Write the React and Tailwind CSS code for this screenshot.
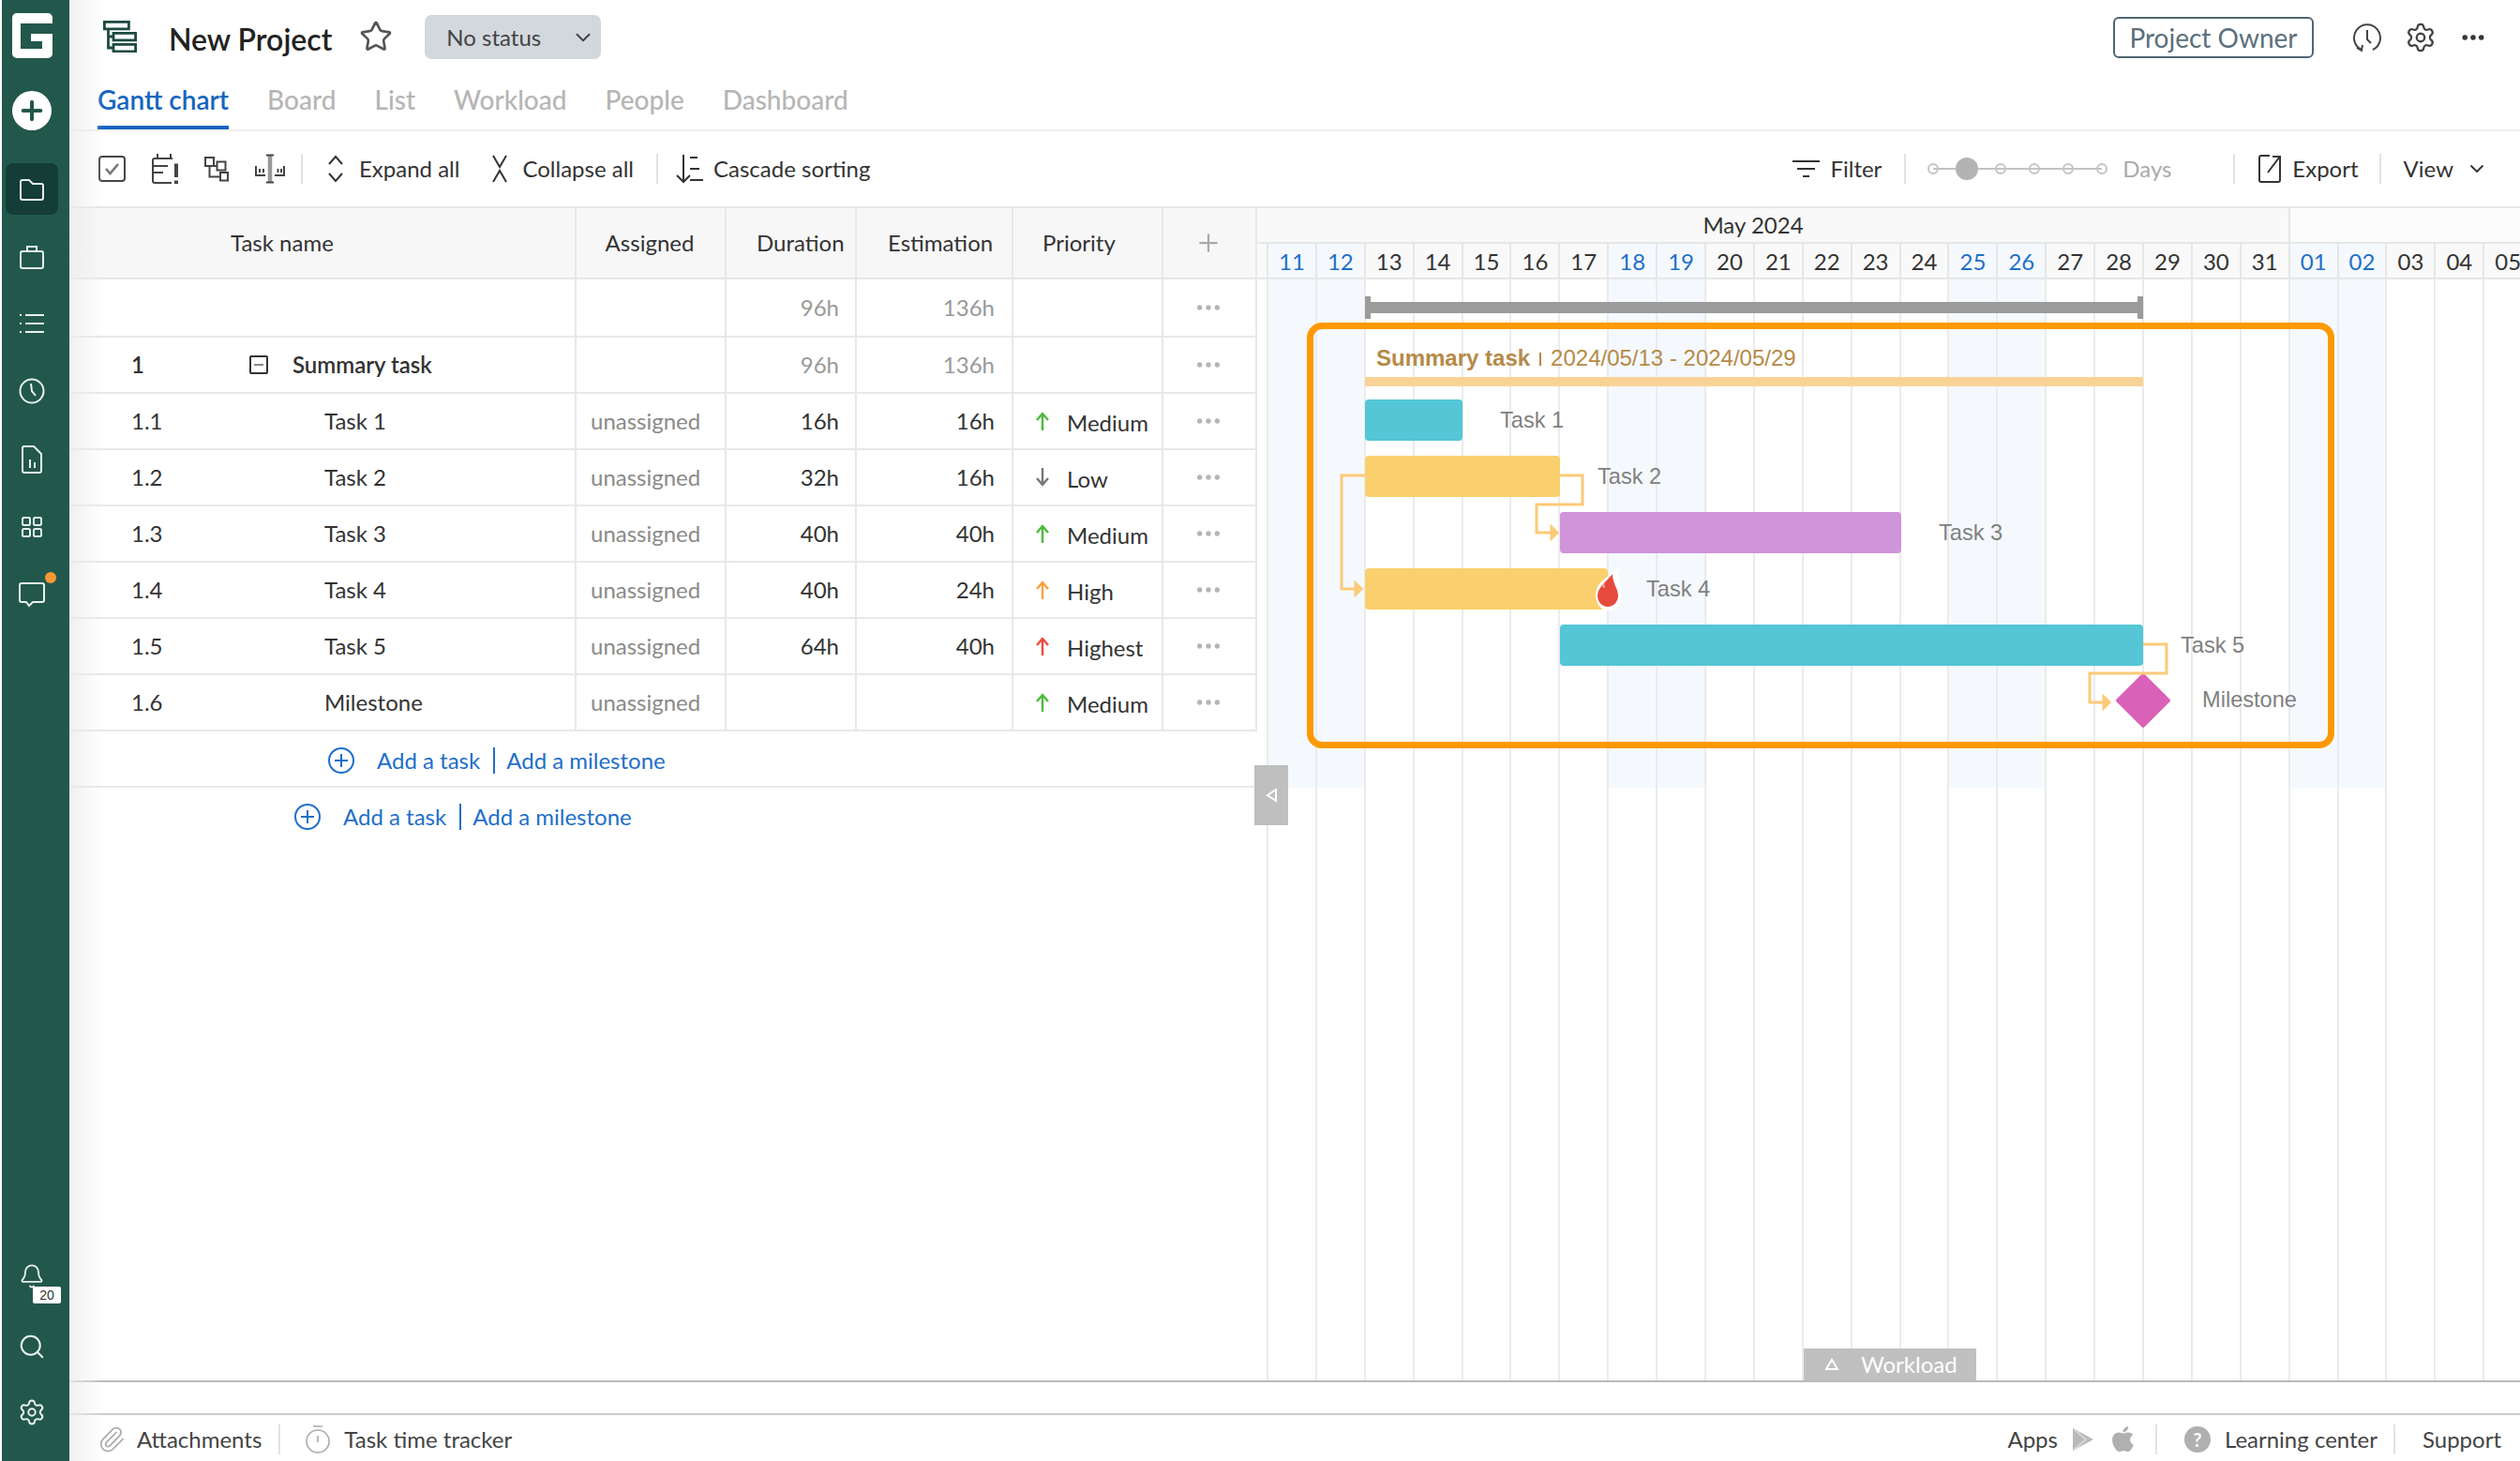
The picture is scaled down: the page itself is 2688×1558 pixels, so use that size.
import React from "react";
import { Star, ChevronDown, Settings, Bell, Search, Paperclip, Plus, Ellipsis } from "lucide-react";
import { FaApple } from "react-icons/fa";

const S = ({ w, h, vb, children, cls = "" , stroke = "currentColor", sw = 2}) => (
  <svg width={w} height={h} viewBox={vb || `0 0 ${w} ${h}`} fill="none" stroke={stroke} strokeWidth={sw} className={`shrink-0 ${cls}`}>{children}</svg>
);

function Logo() {
  return (
    <svg width="43" height="48" viewBox="0 0 43 48" className="shrink-0">
      <rect width="43" height="48" rx="5" fill="#fff" />
      <path d="M9 11H43V22H20V30H32V38H9Z" fill="#22584b" />
    </svg>
  );
}

const SideItem = ({ children, cls = "" }) => <div className={`flex justify-center items-center ${cls}`}>{children}</div>;

function Sidebar() {
  return (
    <div className="w-[72px] h-full bg-[#22584b] flex flex-col items-center text-[#e8f0ee] relative pr-[8px]">
      <div className="mt-[14px]"><Logo /></div>
      <div className="mt-[35px] w-[42px] h-[42px] rounded-full bg-white flex items-center justify-center text-[#22584b]"><Plus size={32} strokeWidth={3} /></div>
      <div className="mt-[35px] w-[56px] h-[55px] rounded-[8px] bg-[#133d36] flex items-center justify-center">
        <S w={28} h={26} vb="0 0 28 26"><path d="M2 5a2 2 0 0 1 2-2h7l4 4h9a2 2 0 0 1 2 2v13a2 2 0 0 1-2 2H4a2 2 0 0 1-2-2Z" /></S>
      </div>
      <SideItem cls="mt-[29px] h-[32px]">
        <S w={28} h={28} vb="0 0 28 28"><rect x="2" y="8" width="24" height="18" rx="2" /><path d="M9 8V3h10v5" /></S>
      </SideItem>
      <SideItem cls="mt-[39px] h-[32px]">
        <S w={28} h={22} vb="0 0 28 22"><path d="M7 2h20M7 11h20M7 20h20M1 2h2M1 11h2M1 20h2" /></S>
      </SideItem>
      <SideItem cls="mt-[40px] h-[32px]">
        <S w={28} h={30} vb="0 0 28 30"><circle cx="14" cy="15" r="12.5" /><path d="M13 7l1 8 4 5" /></S>
      </SideItem>
      <SideItem cls="mt-[41px] h-[32px]">
        <S w={24} h={30} vb="0 0 24 30"><path d="M2 3a2 2 0 0 1 2-2h10l8 8v18a2 2 0 0 1-2 2H4a2 2 0 0 1-2-2Z" /><path d="M10 15v9M15 18v6" /></S>
      </SideItem>
      <SideItem cls="mt-[40px] h-[32px]">
        <S w={22} h={22} vb="0 0 22 22"><rect x="1" y="1" width="8" height="8" rx="1.5" /><rect x="13" y="1" width="8" height="8" rx="1.5" /><rect x="1" y="13" width="8" height="8" rx="1.5" /><rect x="13" y="13" width="8" height="8" rx="1.5" /></S>
      </SideItem>
      <SideItem cls="mt-[40px] h-[32px]">
        <S w={28} h={28} vb="0 0 28 28"><path d="M3 2h22a2 2 0 0 1 2 2v16a2 2 0 0 1-2 2H15l-4 4-3-4H3a2 2 0 0 1-2-2V4a2 2 0 0 1 2-2Z" /></S>
      </SideItem>
      <div className="absolute left-[46px] top-[610px] w-[12px] h-[12px] rounded-full bg-[#f59a33]" />
      <div className="mt-auto relative h-[40px] w-full flex justify-center mb-[46px]">
        <Bell size={28} strokeWidth={1.6} className="mt-[13px]" />
        <div className="absolute left-[33px] top-[38px] w-[30px] h-[18px] rounded-[2px] bg-white text-[#333] text-[14px] leading-[18px] text-center [font-family:'Liberation_Sans',sans-serif]">20</div>
      </div>
      <div className="mb-[38px] h-[32px] flex items-center"><Search size={30} strokeWidth={1.6} /></div>
      <div className="mb-[36px] h-[32px] flex items-center"><Settings size={30} strokeWidth={1.6} /></div>
    </div>
  );
}

function TopBar() {
  const tabs = ["Board", "List", "Workload", "People", "Dashboard"];
  return (
    <div className="h-[140px] border-b-2 border-[#eeeeee] flex flex-col">
      <div className="h-[76px] flex items-start pl-[36px] pr-[33px]">
        <S w={36} h={34} vb="0 0 36 34" cls="mt-[22px] text-[#1d4b41]" sw={2.8}>
          <rect x="1.4" y="1.4" width="26" height="7.5" />
          <rect x="11" y="13.4" width="23.6" height="7.5" />
          <rect x="11" y="25.4" width="23.6" height="7.5" />
          <path d="M5.5 9v20H11M5.5 17H11" />
        </S>
        <div className="ml-[34px] mt-[20px] h-[44px] leading-[44px] text-[32px] font-semibold text-[#222]">New Project</div>
        <Star size={36} strokeWidth={1.8} className="ml-[29px] mt-[21px] text-[#555]" />
        <div className="ml-[34px] mt-[16px] w-[188px] h-[47px] rounded-[7px] bg-[#d3d8de] flex items-center pl-[23px] pr-[6px] text-[24px] text-[#444]">
          No status
          <ChevronDown size={26} strokeWidth={1.8} className="ml-auto" />
        </div>
        <div className="ml-auto mt-[18px] w-[214px] h-[44px] rounded-[6px] border-2 border-[#4f6672] flex items-center justify-center text-[28px] text-[#5b6f7c]">Project Owner</div>
        <S w={32} h={32} vb="0 0 32 32" cls="ml-[41px] mt-[24px] text-[#444]"><path d="M10 29a14 14 0 1 1 12 0" /><path d="M16 8v10l4 4M5 27l5 3 1-6" /></S>
        <Settings size={34} strokeWidth={1.6} className="ml-[24px] mt-[23px] text-[#444]" />
        <Ellipsis size={30} strokeWidth={2.4} className="ml-[24px] mr-[2px] mt-[25px] text-[#333]" />
      </div>
      <div className="flex-1 flex items-stretch pl-[30px] gap-[41px] text-[28px] leading-[50px] text-[#b5b5b5]">
        <div className="text-[#1565c0] font-semibold border-b-[4px] border-[#1565c0] -mb-[2px] h-[64px] -mt-[2px] pt-[7px]">Gantt chart</div>
        {tabs.map((t) => <div key={t} className="pt-[5px] font-medium">{t}</div>)}
      </div>
    </div>
  );
}

const Divider = ({ cls = "" }) => <div className={`w-[2px] h-[32px] bg-[#e2e2e2] shrink-0 ${cls}`} />;

const Dot = () => (
  <div className="flex items-center justify-center">
    <span className="w-[12px] h-[12px] rounded-full border-2 border-[#c4c4c4] bg-white" />
  </div>
);

function Toolbar() {
  return (
    <div className="h-[82px] border-b-2 border-[#e6e6e6] flex items-center pl-[31px] text-[24px] text-[#333]">
      <S w={29} h={28} vb="0 0 29 28" cls="text-[#444]">
        <rect x="1" y="1" width="27" height="26" rx="3" />
        <path d="M8 14l4.5 5L21 9" stroke="#777777" strokeWidth="2.6" />
      </S>
      <S w={28} h={32} vb="0 0 28 32" cls="ml-[28px] text-[#444]">
        <path d="M6 0v5M20 0v5M22 5H3a2 2 0 0 0-2 2v22a2 2 0 0 0 2 2h18" />
        <path d="M2 13H17M2 20H12" />
        <path d="M26 10.5V25M26 28.5V32" strokeWidth="4" />
      </S>
      <S w={26} h={27} vb="0 0 26 27" cls="ml-[28px] text-[#444]">
        <rect x="1" y="1" width="9" height="9" />
        <rect x="13.5" y="5.5" width="9" height="9" />
        <rect x="17" y="17" width="8" height="8.5" />
        <path d="M5.5 10V21.5H17M10 10H13.5" />
      </S>
      <S w={32} h={32} vb="0 0 32 32" cls="ml-[28px] text-[#444]">
        <path d="M16 1V31" stroke="#999999" strokeWidth="4.5" />
        <path d="M12 1.5h8M12 30.5h8" />
        <path d="M1 13V23H11M5 16v4M9 16v4M31 13V23H21M24.5 16v4M28 16v4" />
      </S>
      <Divider cls="ml-[17px]" />
      <S w={18} h={30} vb="0 0 18 30" cls="ml-[26px]"><path d="M2 10l7-8 7 8M2 20l7 8 7-8" /></S>
      <span className="ml-[16px]">Expand all</span>
      <S w={18} h={30} vb="0 0 18 30" cls="ml-[34px]"><path d="M2 1l7 12 7-12M2 29l7-12 7 12" /></S>
      <span className="ml-[15px]">Collapse all</span>
      <Divider cls="ml-[24px]" />
      <S w={32} h={32} vb="0 0 32 32" cls="ml-[18px]"><path d="M9 1v29M2 23l7 7 7-7M16 4h8M16 16h10M16 28h14" /></S>
      <span className="ml-[9px]">Cascade sorting</span>
      <div className="ml-auto flex items-center pr-[33px]">
        <S w={29} h={20} vb="0 0 29 20"><path d="M0 2h29M5 10h19M11 18h7" /></S>
        <span className="ml-[11px]">Filter</span>
        <Divider cls="ml-[24px]" />
        <div className="ml-[11px] w-[216px] relative h-[24px] grid grid-cols-6">
          <div className="absolute left-[18px] right-[18px] top-[11px] h-[2px] bg-[#c4c4c4]" />
          <div className="relative contents">
            <Dot />
            <div className="flex items-center justify-center"><span className="relative w-[24px] h-[24px] rounded-full bg-[#b3b3b3]" /></div>
            <Dot />
            <Dot />
            <Dot />
            <Dot />
          </div>
        </div>
        <span className="ml-[4px] w-[118px] text-[#aaaaaa]">Days</span>
        <Divider />
        <S w={24} h={30} vb="0 0 24 30" cls="ml-[25px]"><path d="M12 1H3a2 2 0 0 0-2 2v24a2 2 0 0 0 2 2h18a2 2 0 0 0 2-2V10M10 19L22 3M15 2h8v8" /></S>
        <span className="ml-[12px]">Export</span>
        <Divider cls="ml-[22px]" />
        <span className="ml-[24px]">View</span>
        <ChevronDown size={24} strokeWidth={1.8} className="ml-[13px] mr-[1px]" />
      </div>
    </div>
  );
}

const Arrow = ({ color, down }) => (
  <svg width="14" height="20" viewBox="0 0 14 20" fill="none" stroke={color} strokeWidth="2.4" className={`shrink-0 ${down ? "rotate-180" : ""}`}>
    <path d="M7 20V2M1 9l6-7 6 7" />
  </svg>
);

const cellBase = "border-r-2 border-[#e8e8e8] flex items-center";
function Row({ num, name, bold, dur, est, prio, muted, h = "h-[60px]" }) {
  const c = muted ? "text-[#999999]" : "text-[#333]";
  return (
    <div className={`flex ${h} border-b-2 border-[#e8e8e8] text-[24px] text-[#333]`}>
      <div className={`${cellBase} w-[541px] relative`}>
        {num && <span className={`absolute left-[66px] ${bold ? "font-semibold" : ""}`}>{num}</span>}
        {bold && (
          <span className="absolute left-[192px] w-[20px] h-[20px] border-2 border-[#333] rounded-[2px] flex items-center justify-center"><span className="w-[10px] h-[2px] bg-[#888]" /></span>
        )}
        {name && <span className={`absolute ${bold ? "left-[238px] font-semibold" : "left-[272px]"}`}>{name}</span>}
      </div>
      <div className={`${cellBase} w-[160px] pl-[15px] text-[#8a8a8a]`}>{num && num !== "1" ? "unassigned" : ""}</div>
      <div className={`${cellBase} w-[139px] justify-end pr-[17px] ${c}`}>{dur}</div>
      <div className={`${cellBase} w-[167px] justify-end pr-[18px] ${c}`}>{est}</div>
      <div className={`${cellBase} w-[160px] pl-[24px]`}>
        {prio && <><Arrow color={prio.color} down={prio.down} /><span className="ml-[19px] pt-[4px]">{prio.label}</span></>}
      </div>
      <div className="w-[100px] border-r-2 border-[#e8e8e8] flex items-center justify-center pr-[2px] text-[#b5b5b5]"><Ellipsis size={32} strokeWidth={2} /></div>
    </div>
  );
}

const AddRow = ({ pad, border }) => (
  <div className={`h-[60px] flex items-center text-[24px] text-[#1e6fc8] ${border ? "border-b-2 border-[#e8e8e8] pt-[4px]" : "pt-[2px]"} ${pad}`}>
    <S w={28} h={28} vb="0 0 28 28" cls="text-[#1e6fc8]"><circle cx="14" cy="14" r="13" /><path d="M14 7v14M7 14h14" /></S>
    <span className="ml-[24px]">Add a task</span>
    <span className="ml-[14px] w-[2px] h-[28px] bg-[#1e6fc8]" />
    <span className="ml-[12px]">Add a milestone</span>
  </div>
);

function Table() {
  const green = "#4cba3c";
  const Med = { color: green, label: "Medium" };
  return (
    <div className="w-[1267px] shrink-0 flex flex-col h-full">
      <div className="flex h-[76px] border-b-2 border-[#e6e6e6] bg-[#f7f7f7] text-[24px] text-[#333]">
        <div className={`${cellBase} w-[541px] pl-[172px]`}>Task name</div>
        <div className={`${cellBase} w-[160px] justify-center pr-[2px]`}>Assigned</div>
        <div className={`${cellBase} w-[139px] pl-[32px]`}>Duration</div>
        <div className={`${cellBase} w-[167px] pl-[33px]`}>Estimation</div>
        <div className={`${cellBase} w-[160px] pl-[31px]`}>Priority</div>
        <div className="w-[100px] border-r-2 border-[#e8e8e8] flex items-center justify-center pr-[2px] text-[#aaaaaa]"><Plus size={30} strokeWidth={1.8} /></div>
      </div>
      <Row h="h-[62px]" dur="96h" est="136h" muted />
      <Row num="1" name="Summary task" bold dur="96h" est="136h" muted />
      <Row num="1.1" name="Task 1" dur="16h" est="16h" prio={Med} />
      <Row num="1.2" name="Task 2" dur="32h" est="16h" prio={{ color: "#777777", label: "Low", down: true }} />
      <Row num="1.3" name="Task 3" dur="40h" est="40h" prio={Med} />
      <Row num="1.4" name="Task 4" dur="40h" est="24h" prio={{ color: "#f9a03c", label: "High" }} />
      <Row num="1.5" name="Task 5" dur="64h" est="40h" prio={{ color: "#f0483e", label: "Highest" }} />
      <Row num="1.6" name="Milestone" prio={Med} />
      <AddRow pad="pl-[276px]" border />
      <AddRow pad="pl-[240px]" />
    </div>
  );
}

const days = ["11","12","13","14","15","16","17","18","19","20","21","22","23","24","25","26","27","28","29","30","31","01","02","03","04","05"];
const wk = new Set(["11","12","18","19","25","26","01","02"]);

function Gantt() {
  return (
    <div className="flex-1 min-w-0 h-full flex flex-col relative">
      <div className="h-[38px] flex border-b-2 border-[#e6e6e6]">
        <div className="w-[1102px] shrink-0 bg-[#f9f9f9] border-r-2 border-[#e6e6e6] flex items-center justify-center text-[24px] leading-none text-[#333] pr-[42px]">May 2024</div>
        <div className="flex-1 bg-[#fcfcfc]" />
      </div>
      <div className="h-[38px] flex border-b-2 border-[#e6e6e6] bg-[#f9f9f9] text-[24px]">
        <div className="w-[10px] shrink-0" />
        {days.map((d) => (
          <div key={d} className={`w-[51.9px] shrink-0 border-l-2 border-[#e6e6e6] flex items-center justify-center pt-[1px] ${wk.has(d) ? "bg-[#f5f9fe] text-[#1e6fc8]" : "text-[#333]"}`}>{d}</div>
        ))}
      </div>
      <div className="flex-1 relative flex">
        <div className="w-[10px] shrink-0" />
        {days.map((d) => (
          <div key={d} className="w-[51.9px] shrink-0 border-l-2 border-[#ebebeb]">
            {wk.has(d) && <div className="h-[542px] bg-[#f5f9fe]" />}
          </div>
        ))}

        <div className="absolute left-[115px] top-[24px] w-[830px] h-[12px] bg-[#9b9b9b]" />
        <div className="absolute left-[115px] top-[18px] w-[6px] h-[24px] bg-[#9b9b9b]" />
        <div className="absolute left-[939px] top-[18px] w-[6px] h-[24px] bg-[#9b9b9b]" />

        <div className="absolute left-[53px] top-[46px] w-[1096px] h-[454px] border-[7px] border-[#ff9900] rounded-[16px]" />

        <div className="absolute left-[127px] top-[69px] h-[30px] leading-[30px] whitespace-nowrap text-[24px] text-[#b58a47] [font-family:'Liberation_Sans',sans-serif]">
          <span className="font-bold">Summary task</span>
          <span className="inline-block w-[2px] h-[14px] bg-[#b58a47] mx-[10px]" />
          <span>2024/05/13 - 2024/05/29</span>
        </div>
        <div className="absolute left-[115px] top-[104px] w-[830px] h-[10px] bg-[#f9d396]" />

        <div className="absolute left-[115px] top-[128px] w-[104px] h-[44px] rounded-[4px] bg-[#54c6d6]" />
        <div className="absolute left-[115px] top-[188px] w-[208px] h-[44px] rounded-[4px] bg-[#fad06e]" />
        <div className="absolute left-[323px] top-[248px] w-[364px] h-[44px] rounded-[4px] bg-[#cf94d9]" />
        <div className="absolute left-[115px] top-[308px] w-[259px] h-[44px] rounded-[4px] bg-[#fad06e]" />
        <div className="absolute left-[323px] top-[368px] w-[622px] h-[44px] rounded-[4px] bg-[#54c6d6]" />
        <div className="absolute left-[924px] top-[428px] w-[42px] h-[42px] rotate-45 rounded-[2px] bg-[#d962b8]" />

        <svg width="1100" height="520" className="absolute left-0 top-0" fill="none" stroke="#fcca78" strokeWidth="3">
          <path d="M115 209H90V330H106" />
          <path d="M323 209H347V240H298V270H315" />
          <path d="M945 389H970V420H888V451H904" />
          <path d="M105 324L111 330L105 336Z" fill="#fcca78" />
          <path d="M314 264L320 270L314 276Z" fill="#fcca78" />
          <path d="M903 445L909 451L903 457Z" fill="#fcca78" />
        </svg>

        <svg width="30" height="48" viewBox="0 0 30 48" className="absolute left-[359px] top-[306px]">
          <path d="M28 1C20 8 2 16 2 30C2 40 8 47 15 47C24 47 30 40 30 29C30 22 24 14 28 1Z" fill="#fff" />
          <path d="M20 8C16 14 4 22 4 31C4 38 9 43 15 43C21 43 26 38 26 31C26 24 20 18 20 8Z" fill="#e64a3d" />
          <path d="M9 22l2-4 1 5z" fill="#f5b5a8" />
        </svg>

        {[
          ["left-[259px] top-[135px]", "Task 1"],
          ["left-[363px] top-[195px]", "Task 2"],
          ["left-[727px] top-[255px]", "Task 3"],
          ["left-[415px] top-[315px]", "Task 4"],
          ["left-[985px] top-[375px]", "Task 5"],
          ["left-[1008px] top-[433px]", "Milestone"],
        ].map(([p, t]) => (
          <div key={t} className={`absolute ${p} h-[30px] leading-[30px] whitespace-nowrap text-[23.6px] text-[#808080] [font-family:'Liberation_Sans',sans-serif]`}>{t}</div>
        ))}

        <div className="absolute left-[-3px] top-[518px] w-[36px] h-[64px] bg-[#bfbfbf] flex items-center justify-center">
          <svg width="14" height="16" viewBox="0 0 14 16" fill="none" stroke="#fff" strokeWidth="2"><path d="M12 2L3 8l9 6Z" /></svg>
        </div>
        <div className="absolute left-[583px] bottom-0 w-[184px] h-[34px] bg-[#bdbdbd]/95 flex items-center text-white text-[24px] pl-[22px]">
          <svg width="16" height="14" viewBox="0 0 16 14" fill="none" stroke="#fff" strokeWidth="2"><path d="M8 2L2 12h12Z" /></svg>
          <span className="ml-[23px]">Workload</span>
        </div>
      </div>
    </div>
  );
}

function Footer() {
  return (
    <div className="h-[51px] border-t-2 border-[#cccccc] flex items-center text-[24px] text-[#444] pl-[30px] pr-[20px] pt-[2px]">
      <Paperclip size={30} strokeWidth={1.4} className="text-[#aaaaaa]" />
      <span className="ml-[12px]">Attachments</span>
      <Divider cls="ml-[18px]" />
      <S w={26} h={32} vb="0 0 26 32" cls="ml-[27px] text-[#aaaaaa]" sw={1.6}><circle cx="13" cy="18" r="12" /><path d="M8 2h10M13 12v7" /></S>
      <span className="ml-[15px]">Task time tracker</span>
      <div className="ml-auto flex items-center">
        <span>Apps</span>
        <svg width="24" height="26" viewBox="0 0 24 26" className="ml-[15px]">
          <path d="M1 1L23 13 1 25Z" fill="#b8b8b8" />
          <path d="M2 2L15 13 2 24" fill="none" stroke="#d6d6d6" strokeWidth="2" />
        </svg>
        <FaApple size={31} className="ml-[15px] text-[#b0b0b0]" />
        <Divider cls="ml-[19px]" />
        <div className="ml-[29px] w-[28px] h-[28px] rounded-full bg-[#b0b0b0] text-white font-bold text-[20px] leading-[28px] text-center">?</div>
        <span className="ml-[15px]">Learning center</span>
        <Divider cls="ml-[17px]" />
        <span className="ml-[29px]">Support</span>
      </div>
    </div>
  );
}

export default function App() {
  return (
    <div className="w-[2688px] h-[1558px] flex bg-white overflow-hidden relative [font-family:Lato,sans-serif]">
      <div className="w-[2px] shrink-0" />
      <Sidebar />
      <div className="flex-1 min-w-0 flex flex-col">
        <TopBar />
        <Toolbar />
        <div className="h-[1252px] flex border-b-2 border-[#bbbbbb]">
          <Table />
          <Gantt />
        </div>
        <div className="h-[33px]" />
        <Footer />
      </div>
      <div className="absolute left-[74px] top-0 bottom-0 w-[36px] bg-linear-to-r from-[#ececec]/80 to-transparent pointer-events-none" />
    </div>
  );
}
